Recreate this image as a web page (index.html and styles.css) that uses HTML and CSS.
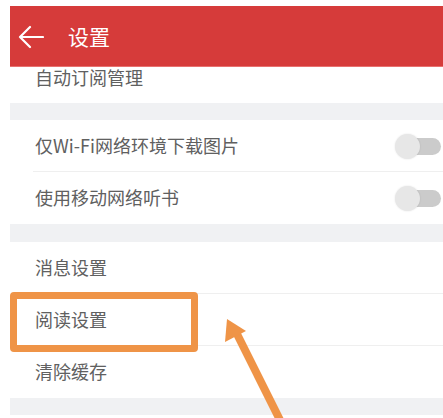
FILE: index.html
```html
<!DOCTYPE html>
<html lang="zh-CN">
<head>
<meta charset="utf-8">
<title>设置</title>
<link rel="stylesheet" href="styles.css">
</head>
<body>
<div class="page">
  <header class="bar">
    <svg class="back" width="26" height="24" viewBox="0 0 26 24">
      <path d="M2 12 H25 M12 2 L2 12 L12 22" fill="none" stroke="#fff" stroke-width="2.2" stroke-linecap="round" stroke-linejoin="round"/>
    </svg>
    <span class="title">设置</span>
  </header>
  <div class="list">
    <div class="row clipped"><span class="label">自动订阅管理</span></div>
    <div class="gap"></div>
    <div class="row"><span class="label">仅Wi-Fi网络环境下载图片</span><span class="toggle"><span class="knob"></span></span></div>
    <div class="row last"><span class="label">使用移动网络听书</span><span class="toggle"><span class="knob"></span></span></div>
    <div class="gap g2"></div>
    <div class="row"><span class="label">消息设置</span></div>
    <div class="row"><span class="label">阅读设置</span></div>
    <div class="row last"><span class="label">清除缓存</span></div>
    <div class="gap g3"></div>
  </div>
  <div class="highlight"></div>
  <svg class="pointer" width="443" height="418" viewBox="0 0 443 418">
    <line x1="237" y1="334" x2="280" y2="420" stroke="#ef9447" stroke-width="8"/>
    <polygon points="227,319 246,331 225,342" fill="#ef9447"/>
  </svg>
</div>
</body>
</html>
```
FILE: styles.css
```css
* { box-sizing: border-box; }
html, body { margin: 0; padding: 0; background: #fff; }
body {
  width: 443px;
  height: 418px;
  overflow: hidden;
  font-family: "Noto Sans CJK SC", "Noto Sans", sans-serif;
}
.page {
  position: relative;
  width: 443px;
  height: 418px;
  padding: 6px 0 0 10px;
}
.bar {
  height: 61px;
  background: #d63b3a;
  display: flex;
  align-items: center;
  padding-left: 8px;
  border-bottom: 1px solid #e8716f;
}
.back { display: block; margin-top: 2px; }
.title {
  color: #fff;
  font-size: 21px;
  margin-left: 24px;
  line-height: 1;
  margin-top: 1px;
}
.list { background: #fff; }
.row {
  height: 52px;
  display: flex;
  align-items: center;
  justify-content: space-between;
  padding: 0 2px 0 25px;
  position: relative;
}
.row::after {
  content: "";
  position: absolute;
  left: 23px;
  right: 0;
  bottom: 0;
  height: 1px;
  background: #efefef;
}
.row.last::after, .row.clipped::after { display: none; }
.row.clipped {
  height: 36px;
  padding-bottom: 14px;
}
.label {
  font-size: 18px;
  color: #606060;
  line-height: 1.2;
}
.gap { height: 17px; background: #f0f1f3; }
.g2 { height: 18px; }
.g3 { height: 17px; }
.toggle {
  position: relative;
  width: 46px;
  height: 25px;
}
.toggle::before {
  content: "";
  position: absolute;
  left: 10px;
  right: 0;
  top: 4px;
  height: 17px;
  border-radius: 9px;
  background: #cbcbcb;
}
.knob {
  position: absolute;
  left: 0;
  top: 0;
  width: 25px;
  height: 25px;
  border-radius: 50%;
  background: #e7e7e7;
  box-shadow: 0 0 2px rgba(0,0,0,0.12);
}
.highlight {
  position: absolute;
  left: 10px;
  top: 292px;
  width: 188px;
  height: 60px;
  border: 7px solid #ef9447;
  border-radius: 4px;
}
.pointer {
  position: absolute;
  left: 0;
  top: 0;
}
```
